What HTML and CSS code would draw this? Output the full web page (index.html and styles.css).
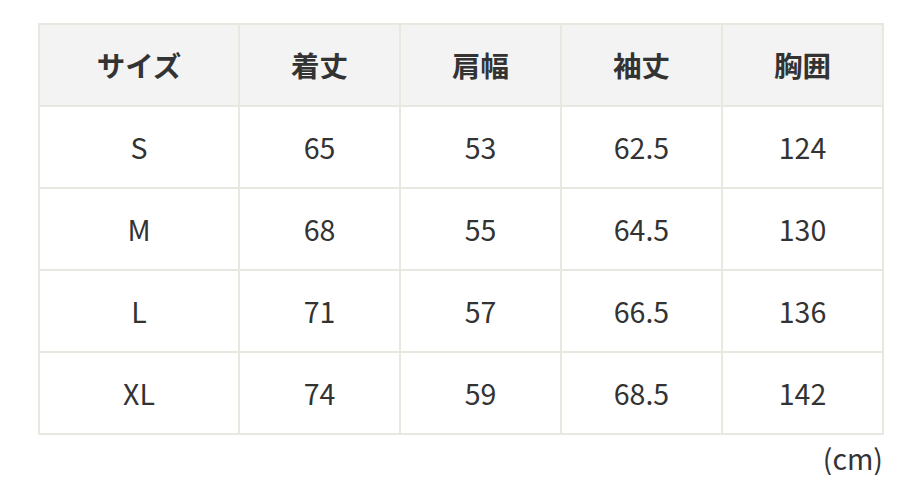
FILE: index.html
```html
<!DOCTYPE html>
<html lang="ja">
<head>
<meta charset="utf-8">
<link rel="stylesheet" href="styles.css">
</head>
<body>
<div class="wrap">
<table class="size-table">
<colgroup><col class="c1"><col class="c"><col class="c"><col class="c"><col class="c"></colgroup>
<thead>
<tr><th>サイズ</th><th>着丈</th><th>肩幅</th><th>袖丈</th><th>胸囲</th></tr>
</thead>
<tbody>
<tr><td>S</td><td>65</td><td>53</td><td>62.5</td><td>124</td></tr>
<tr><td>M</td><td>68</td><td>55</td><td>64.5</td><td>130</td></tr>
<tr><td>L</td><td>71</td><td>57</td><td>66.5</td><td>136</td></tr>
<tr><td>XL</td><td>74</td><td>59</td><td>68.5</td><td>142</td></tr>
</tbody>
</table>
<div class="unit">(cm)</div>
</div>
</body>
</html>
```
FILE: styles.css
```css
html, body { margin: 0; padding: 0; background: #fff; }
body {
  font-family: "Noto Sans CJK JP", "Noto Sans", sans-serif;
  color: #333;
}
.wrap {
  padding: 23px 25px 0 38px;
  width: 845px;
}
.size-table {
  border-collapse: collapse;
  width: 845px;
  table-layout: fixed;
}
.c1 { width: 200px; }
.c { width: 161px; }
.size-table th, .size-table td {
  border: 2px solid #e8e8e1;
  height: 80px;
  padding: 0;
  text-align: center;
  vertical-align: middle;
  font-size: 28.5px;
  line-height: 1;
}
.size-table th {
  background: #f3f3f3;
  font-weight: 700;
}
.size-table td { font-weight: 400; }
.unit {
  text-align: right;
  font-size: 28.5px;
  margin-top: 6px;
  line-height: 1.2;
}
```
